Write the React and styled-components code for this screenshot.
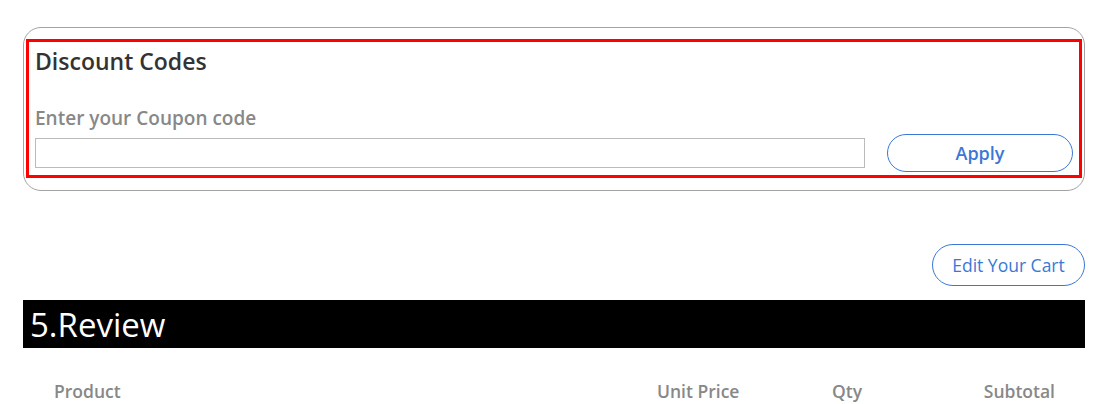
import React from 'react'
import styled, { createGlobalStyle } from 'styled-components'

const GlobalStyle = createGlobalStyle`
  body {
    margin: 0;
    background: #ffffff;
    font-family: 'Open Sans', 'Lato', sans-serif;
  }
`

const Page = styled.div`
  padding: 27px 21px 0 23px;
`

const Card = styled.div`
  border: 1px solid #a3a3a3;
  border-radius: 18px;
  padding: 11px 2px 12px 2px;
`

const Highlight = styled.div`
  border: 3px solid #ff0000;
  padding: 4px 6px 3px 6px;
`

const Title = styled.h3`
  margin: 0;
  font-size: 23px;
  font-weight: 600;
  color: #333333;
  line-height: 30px;
`

const Label = styled.label`
  display: block;
  margin-top: 30px;
  font-size: 19px;
  font-weight: 600;
  color: #888888;
  line-height: 24px;
`

const Row = styled.div`
  display: flex;
  align-items: center;
  gap: 22px;
  margin-top: 4px;
`

const Input = styled.input`
  flex: 1;
  height: 30px;
  box-sizing: border-box;
  border: 1px solid #bbbbbb;
  outline: none;
  padding: 0 6px;
  font-size: 16px;
`

const PillButton = styled.button`
  box-sizing: border-box;
  border: 1px solid #3b78d6;
  border-radius: 999px;
  background: #ffffff;
  color: #3b78d6;
  font-family: inherit;
  font-size: ${p => p.bold ? '18px' : '17.5px'};
  font-weight: ${p => p.bold ? 600 : 400};
  width: ${p => p.width}px;
  height: ${p => p.height}px;
  padding: 0;
  cursor: pointer;
`

const Actions = styled.div`
  display: flex;
  justify-content: flex-end;
  margin-top: 53px;
`

const SectionBar = styled.div`
  margin-top: 14px;
  background: #000000;
  color: #ffffff;
  height: 48px;
  display: flex;
  align-items: center;
  padding-left: 7px;
  font-size: 33px;
  font-weight: 500;
`

const TableHead = styled.div`
  display: grid;
  grid-template-columns: 603px 175px 1fr auto;
  padding: 31px 30px 0 31px;
`

const HeadCell = styled.div`
  font-size: 17.5px;
  font-weight: 600;
  color: #888888;
  line-height: 24px;
`

export default function App() {
  return (
    <>
      <GlobalStyle />
      <Page>
        <Card>
          <Highlight>
            <Title>Discount Codes</Title>
            <Label>Enter your Coupon code</Label>
            <Row>
              <Input type="text" />
              <PillButton bold width={186} height={38}>Apply</PillButton>
            </Row>
          </Highlight>
        </Card>
        <Actions>
          <PillButton width={153} height={42}>Edit Your Cart</PillButton>
        </Actions>
        <SectionBar>5.Review</SectionBar>
        <TableHead>
          <HeadCell>Product</HeadCell>
          <HeadCell>Unit Price</HeadCell>
          <HeadCell>Qty</HeadCell>
          <HeadCell>Subtotal</HeadCell>
        </TableHead>
      </Page>
    </>
  )
}
